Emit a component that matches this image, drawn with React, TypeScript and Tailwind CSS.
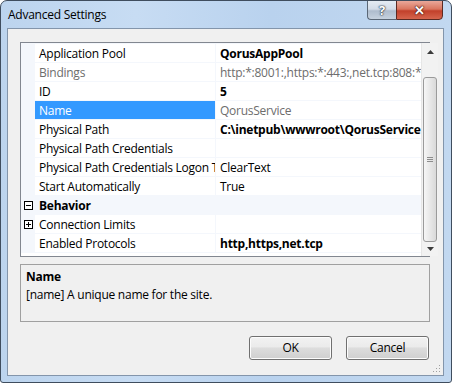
import React from "react";

type Row =
  | { kind: "prop"; name: string; value: string; bold?: boolean; gray?: boolean; selected?: boolean; expand?: boolean }
  | { kind: "cat"; name: string };

const rows: Row[] = [
  { kind: "prop", name: "Application Pool", value: "QorusAppPool", bold: true },
  { kind: "prop", name: "Bindings", value: "http:*:8001:,https:*:443:,net.tcp:808:*", gray: true },
  { kind: "prop", name: "ID", value: "5", bold: true },
  { kind: "prop", name: "Name", value: "QorusService", selected: true, gray: true },
  { kind: "prop", name: "Physical Path", value: "C:\\inetpub\\wwwroot\\QorusService", bold: true },
  { kind: "prop", name: "Physical Path Credentials", value: "" },
  { kind: "prop", name: "Physical Path Credentials Logon Type", value: "ClearText" },
  { kind: "prop", name: "Start Automatically", value: "True" },
  { kind: "cat", name: "Behavior" },
  { kind: "prop", name: "Connection Limits", value: "", expand: true },
  { kind: "prop", name: "Enabled Protocols", value: "http,https,net.tcp", bold: true },
];

function Box({ plus }: { plus?: boolean }) {
  return (
    <svg width="9" height="9" viewBox="0 0 9 9" className="block">
      <rect x="0.5" y="0.5" width="8" height="8" fill="#fff" stroke="#000" />
      <line x1="2" y1="4.5" x2="7" y2="4.5" stroke="#000" />
      {plus && <line x1="4.5" y1="2" x2="4.5" y2="7" stroke="#000" />}
    </svg>
  );
}

function GridRow({ row }: { row: Row }) {
  if (row.kind === "cat") {
    return (
      <div className="flex h-[19px] items-center bg-[#f4f7fc] border-b border-[#f4f7fc]">
        <div className="w-[14px] flex justify-center pl-[1px]">
          <Box />
        </div>
        <div className="pl-[4px] pt-[1px] font-bold text-black">{row.name}</div>
      </div>
    );
  }
  return (
    <div className="flex h-[19px] border-b border-[#f4f7fc]">
      <div className="w-[14px] shrink-0 bg-[#f4f7fc] flex items-center justify-center pl-[1px]">
        {row.expand && <Box plus />}
      </div>
      <div
        className={
          "w-[181px] shrink-0 overflow-hidden whitespace-nowrap pl-[4px] pt-[1px] leading-[17px] border-r border-[#f4f7fc] " +
          (row.selected ? "bg-[#3399ff] text-white" : row.gray ? "text-[#6d6d6d]" : "text-black")
        }
      >
        {row.name}
      </div>
      <div
        className={
          "flex-1 overflow-hidden whitespace-nowrap pl-[4px] pt-[1px] leading-[17px] " +
          (row.gray ? "text-[#6d6d6d]" : "text-black") +
          (row.bold ? " font-bold" : "")
        }
      >
        {row.value}
      </div>
    </div>
  );
}

function ScrollBar() {
  return (
    <div className="w-[17px] shrink-0 flex flex-col bg-[#f2f2f2] border-l border-[#e6e6e6]">
      <div className="h-[18px] shrink-0 flex items-center justify-center">
        <svg width="7" height="4" viewBox="0 0 7 4">
          <polygon points="3.5,0 7,4 0,4" fill="#3b3b3b" />
        </svg>
      </div>
      <div className="h-[16px] shrink-0" />
      <div className="h-[165px] shrink-0 mx-[1px] rounded-[3px] border border-[#9a9a9a] bg-gradient-to-r from-[#f6f6f6] to-[#d9d9d9] flex flex-col items-center justify-center gap-[1px]">
        <div className="w-[6px] h-[1px] bg-[#8c8c8c]" />
        <div className="w-[6px] h-[1px] bg-[#8c8c8c]" />
        <div className="w-[6px] h-[1px] bg-[#8c8c8c]" />
      </div>
      <div className="flex-1 flex items-center justify-center">
        <svg width="7" height="4" viewBox="0 0 7 4">
          <polygon points="0,0 7,0 3.5,4" fill="#3b3b3b" />
        </svg>
      </div>
    </div>
  );
}

function Button({ label }: { label: string }) {
  return (
    <div className="w-[83px] h-[24px] rounded-[3px] border border-[#707070] bg-[linear-gradient(#f2f2f2_0%,#ebebeb_45%,#dddddd_50%,#cfcfcf_100%)] shadow-[inset_0_0_0_1px_#fcfcfc] flex items-center justify-center text-black">
      {label}
    </div>
  );
}

export default function App() {
  return (
    <div
      className="relative w-[452px] h-[383px] overflow-hidden rounded-t-[7px] rounded-b-[3px] border border-[#3f4d5e] bg-[linear-gradient(90deg,#bcd4ee_0%,#c7dcf3_30%,#b9d2ee_60%,#c2d8f0_100%)] flex flex-col text-[12px] tracking-[-0.25px] text-black"
      style={{ fontFamily: '"Segoe UI", "Open Sans", "Noto Sans", sans-serif' }}
    >
      {/* title bar */}
      <div className="h-[27px] shrink-0 flex items-start">
        <div className="pl-[7px] pt-[6px] leading-[16px] text-black">Advanced Settings</div>
        <div className="ml-auto mr-[8px] flex -mt-[1px]">
          <div className="w-[29px] h-[20px] rounded-bl-[4px] border border-[#5a6776] border-r-0 bg-[linear-gradient(#e4ebf3_0%,#d3dce8_45%,#aebccd_55%,#c6d2df_100%)] flex items-center justify-center">
            <span className="text-white font-bold text-[13px] leading-none [text-shadow:0_0_1px_#2d3a4a,0_0_1px_#2d3a4a,0_0_2px_#2d3a4a]">?</span>
          </div>
          <div className="w-[47px] h-[20px] rounded-br-[4px] border border-[#5b2a22] bg-[linear-gradient(#e9a89a_0%,#d9765f_45%,#c2402b_55%,#d6654d_100%)] flex items-center justify-center">
            <span className="text-white font-bold text-[13px] leading-none [text-shadow:0_0_1px_#4a1a12,0_0_1px_#4a1a12,0_0_2px_#4a1a12]">✕</span>
          </div>
        </div>
      </div>

      {/* client area */}
      <div className="relative ml-[6px] mr-[7px] mb-[6px] h-[348px] border border-[#8395ab] bg-[#f0f0f0] flex flex-col pl-[12px]">
        {/* property grid */}
        <div className="mt-[13px] w-[410px] h-[215px] border border-[#828790] bg-white flex">
          <div className="flex-1 flex flex-col border-t border-[#f4f7fc]">
            {rows.map((r, i) => (
              <GridRow key={i} row={r} />
            ))}
          </div>
          <ScrollBar />
        </div>

        {/* description */}
        <div className="mt-[7px] w-[410px] h-[58px] border border-[#a0a0a0] bg-[#f0f0f0] pl-[5px] pt-[3px]">
          <div className="font-bold leading-[18px]">Name</div>
          <div className="leading-[18px]">[name] A unique name for the site.</div>
        </div>

        {/* buttons */}
        <div className="mt-[14px] w-[410px] flex justify-end gap-[14px] pr-[1px]">
          <Button label="OK" />
          <Button label="Cancel" />
        </div>

        {/* resize grip */}
        <svg className="absolute right-[2px] bottom-[2px]" width="10" height="10" viewBox="0 0 10 10">
          {[
            [8, 2],
            [5, 5],
            [8, 5],
            [2, 8],
            [5, 8],
            [8, 8],
          ].map(([x, y], i) => (
            <rect key={i} x={x} y={y} width="1" height="1" fill="#a0a0a0" />
          ))}
        </svg>
      </div>
    </div>
  );
}
